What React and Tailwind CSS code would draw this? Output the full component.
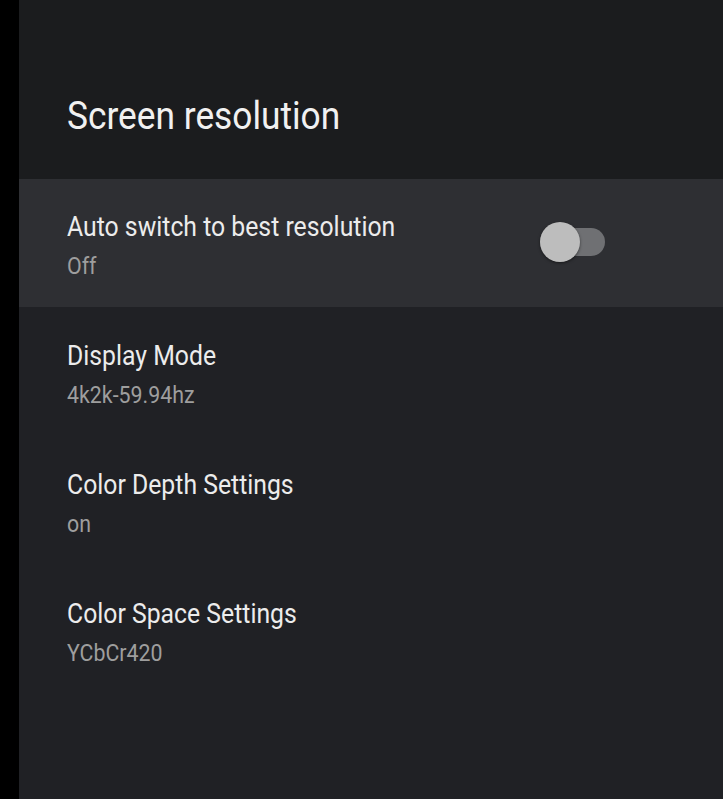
export default function App() {
  const rows = [
    { title: "Display Mode", sub: "4k2k-59.94hz" },
    { title: "Color Depth Settings", sub: "on" },
    { title: "Color Space Settings", sub: "YCbCr420" },
  ];
  return (
    <div className="flex w-[723px] h-[799px] bg-black overflow-hidden" style={{ fontFamily: "Roboto, sans-serif" }}>
      <div className="w-[19px] shrink-0 bg-black" />
      <div className="flex-1 flex flex-col bg-[#202125]">
        <div className="h-[179px] shrink-0 bg-[#1b1c1e] pl-[48px] pt-[92px]">
          <div className="text-[39px] leading-[48px] text-[#f1f1f1] whitespace-nowrap origin-left scale-x-[0.905]">Screen resolution</div>
        </div>
        <div className="h-[128px] shrink-0 bg-[#2e2f33] pl-[48px] pt-[30px] flex">
          <div className="flex-1">
            <div className="text-[28px] leading-[36px] text-[#ececec] whitespace-nowrap origin-left scale-x-[0.885]">Auto switch to best resolution</div>
            <div className="mt-[6px] text-[24px] leading-[30px] text-[#9e9e9e] whitespace-nowrap origin-left scale-x-[0.89]">Off</div>
          </div>
          <div className="w-[183px] shrink-0 pt-[13px]">
            <div className="relative w-[65px] h-[40px] flex items-center">
              <div className="w-[65px] h-[28px] rounded-full bg-[#6f7073]" />
              <div className="absolute left-0 top-0 w-[40px] h-[40px] rounded-full bg-[#bdbdbd] shadow-[0_1px_3px_rgba(0,0,0,0.5)]" />
            </div>
          </div>
        </div>
        {rows.map((r) => (
          <div key={r.title} className="h-[129px] shrink-0 pl-[48px] pt-[31px]">
            <div className="text-[28px] leading-[36px] text-[#ececec] whitespace-nowrap origin-left scale-x-[0.885]">{r.title}</div>
            <div className="mt-[6px] text-[24px] leading-[30px] text-[#9e9e9e] whitespace-nowrap origin-left scale-x-[0.89]">{r.sub}</div>
          </div>
        ))}
      </div>
    </div>
  );
}
